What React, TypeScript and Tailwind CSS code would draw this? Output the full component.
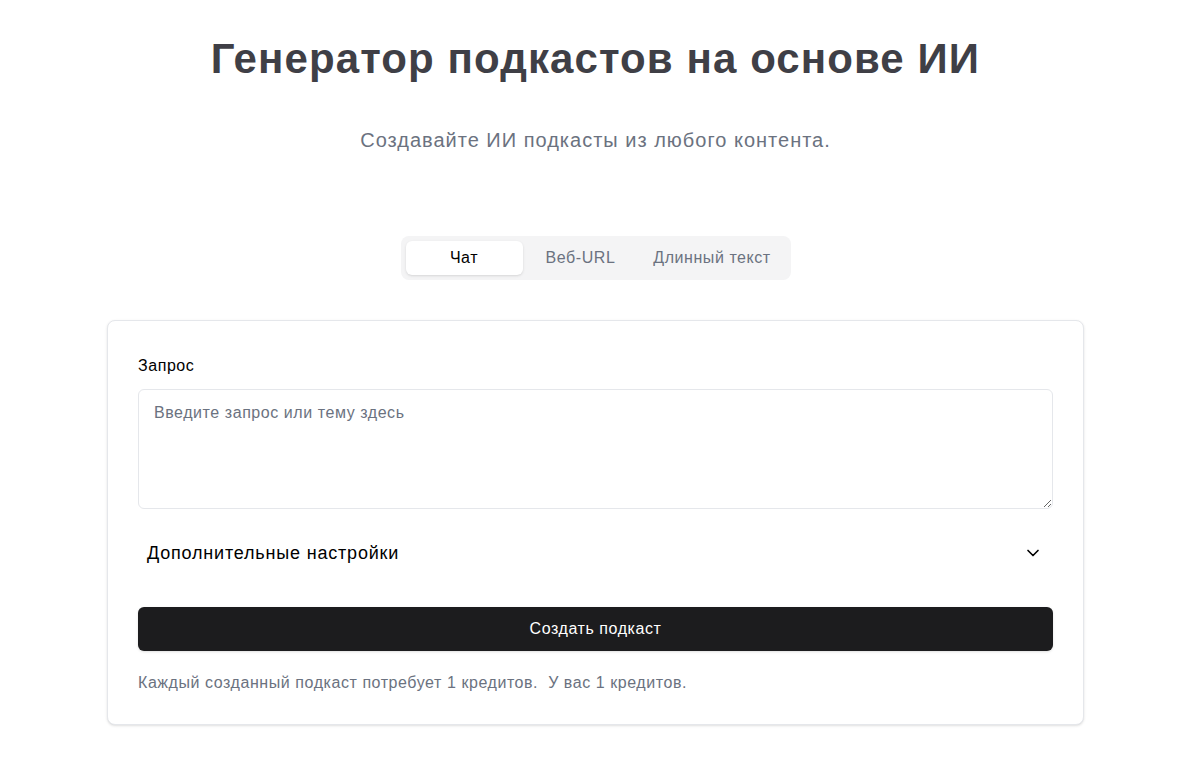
import { useState } from 'react';
import { ChevronDown } from 'lucide-react';

const tabs = ['Чат', 'Веб-URL', 'Длинный текст'];

export default function App() {
  const [active, setActive] = useState(0);
  const [open, setOpen] = useState(false);

  return (
    <div className="min-h-screen bg-white pr-[9px] font-['Liberation_Sans',Arial,sans-serif]">
      <div className="flex flex-col items-center pt-[38px]">
        <h1 className="text-[42px] leading-[42px] font-bold tracking-[0.026em] text-[#3f3f46]">
          Генератор подкастов на основе ИИ
        </h1>
        <p className="mt-[46px] text-xl leading-7 tracking-[0.05em] text-[#6b7280]">
          Создавайте ИИ подкасты из любого контента.
        </p>

        <div className="mt-[82px] flex h-11 items-center rounded-lg bg-[#f4f4f5] p-[5px]">
          {tabs.map((tab, i) => (
            <button
              key={tab}
              onClick={() => setActive(i)}
              className={`h-[34px] rounded-md px-3 text-base tracking-[0.035em] ${
                i === 0 ? 'w-[117px]' : i === 1 ? 'w-[116px]' : 'w-[147px]'
              } ${
                active === i
                  ? 'bg-white text-black shadow-sm'
                  : 'text-[#6b7280]'
              }`}
            >
              {tab}
            </button>
          ))}
        </div>

        <div className="mt-10 w-[977px] rounded-lg border border-[#e5e7eb] bg-white px-[30px] pt-[33px] pb-[29px] tracking-[0.035em] shadow-sm">
          <label className="block text-base leading-6 text-black">Запрос</label>
          <textarea
            placeholder="Введите запрос или тему здесь"
            className="mt-[11px] block h-[120px] w-full rounded-md border border-[#e5e7eb] px-[15px] py-[11px] text-base tracking-[0.035em] text-black placeholder:text-[#6b7280] focus:outline-none"
          />

          <button
            onClick={() => setOpen(!open)}
            className="mt-4 flex h-14 w-full items-center justify-between pl-[9px] pr-[10px] text-lg tracking-[0.045em] text-black"
          >
            <span>Дополнительные настройки</span>
            <ChevronDown className={`h-5 w-5 ${open ? 'rotate-180' : ''}`} strokeWidth={2} />
          </button>

          <button className="mt-[26px] flex h-11 w-full items-center justify-center rounded-md bg-[#1c1c1e] text-base tracking-[0.035em] text-white shadow-sm">
            Создать подкаст
          </button>

          <p className="mt-5 whitespace-pre text-base leading-6 text-[#6b7280]">
            Каждый созданный подкаст потребует 1 кредитов.  У вас 1 кредитов.
          </p>
        </div>
      </div>
    </div>
  );
}
